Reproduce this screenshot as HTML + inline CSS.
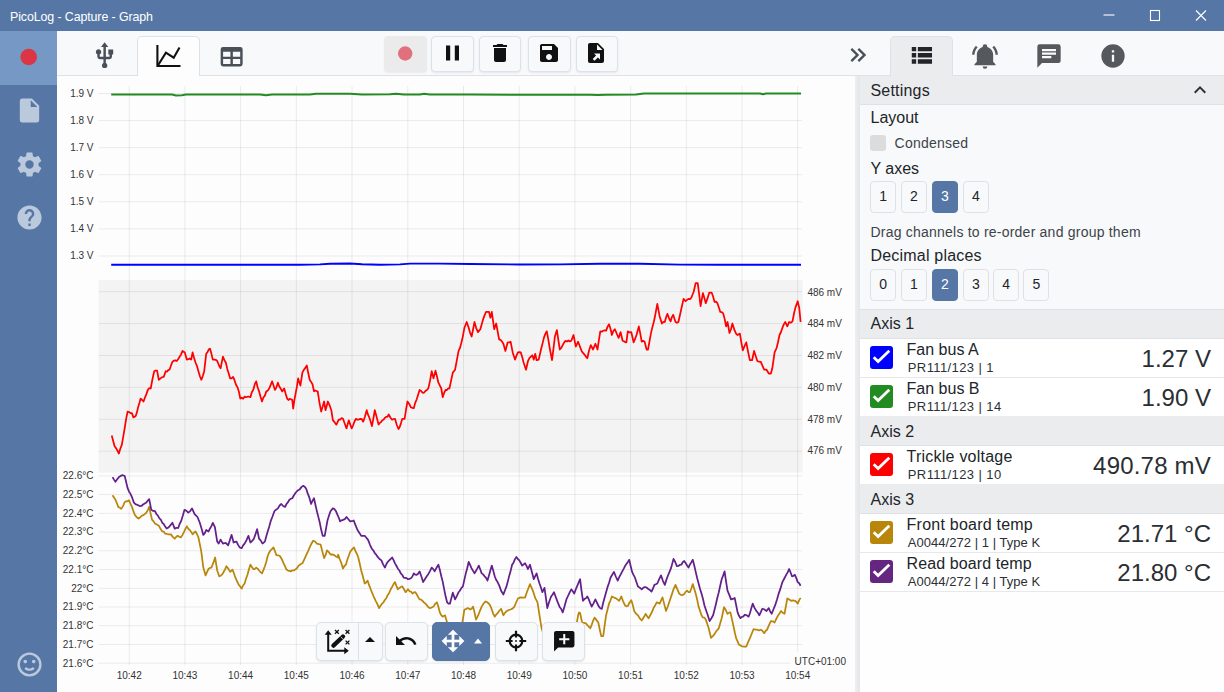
<!DOCTYPE html>
<html lang="en">
<head>
<meta charset="utf-8">
<title>PicoLog - Capture - Graph</title>
<style>
*{box-sizing:border-box;margin:0;padding:0}
html,body{width:1224px;height:692px;overflow:hidden;background:#fdfdfd;font-family:"Liberation Sans",Arial,sans-serif;color:#212529}
.abs{position:absolute}
#titlebar{position:absolute;left:0;top:0;width:1224px;height:31px;background:#5677a5;color:#fff}
#titlebar .t{position:absolute;left:10px;top:10px;font-size:12.4px;line-height:15px;letter-spacing:-0.1px}
#sidebar{position:absolute;z-index:2;left:0;top:31px;width:56.8px;height:661px;background:#5677a5}
#sidebar .hl{position:absolute;left:0;top:0;width:56.8px;height:53.7px;background:#7599c4}
#sidebar svg{position:absolute;fill:#bbc9dc}
#tabbar{position:absolute;left:56px;top:31px;width:1168px;height:45px;background:#f8f9fa;border-bottom:1px solid #dee2e6}
.tab{position:absolute;top:5px;height:40px;width:63px;border:1px solid #dee2e6;border-bottom:none;border-radius:5px 5px 0 0}
.tb{position:absolute;top:5px;height:36px;width:42.6px;border:1px solid #dbe2ea;border-radius:4px;background:#f8f9fa;box-shadow:0 1px 2px rgba(0,0,0,.08)}
.tb svg,.cb svg{position:absolute}
.chart{position:absolute;left:56px;top:76px}
#split{position:absolute;left:855px;top:76px;width:4.6px;height:616px;background:linear-gradient(90deg,#eeeff0,#e3e5e7)}
#panel{position:absolute;left:859.6px;top:76px;width:364.4px;height:616px;background:#fefefe}
#panel .body{position:absolute;left:0;top:0;width:364.4px;height:234px;background:#f8f9fa}
#panel .hdr{position:absolute;left:0;width:364.4px;background:#ebecee;border-top:1px solid #dee2e6;border-bottom:1px solid #dee2e6;font-size:16px}
#panel .hdr span{position:absolute;left:10.9px}
#panel .h{position:absolute;left:10.9px;font-size:16px;line-height:18px;white-space:nowrap}
#panel .s{position:absolute;left:10.9px;font-size:14px;line-height:16px;color:#3d4349;white-space:nowrap}
.nb{position:absolute;width:26px;height:31.6px;border:1px solid #dee2e6;border-radius:4px;background:#f8f9fa;font-size:14px;line-height:29.6px;text-align:center;color:#212529}
.nb.on{background:#5677a5;border-color:#5677a5;color:#fff}
.row{position:absolute;left:0;width:364.4px;height:39px;background:#fff;border-bottom:1px solid #e6e8eb}
.row .ck{position:absolute;left:10.3px;top:7.1px;width:23px;height:23px;border-radius:3px}
.row .ck svg{position:absolute;left:0;top:0}
.row .n{position:absolute;left:47px;top:2.2px;font-size:16px;line-height:18px;white-space:nowrap}
.row .d{position:absolute;left:48.2px;top:22.6px;font-size:13px;line-height:14px;letter-spacing:0.4px;white-space:nowrap;color:#2b3035}
.row .v{position:absolute;right:13px;top:6px;font-size:24px;line-height:28px;white-space:nowrap;color:#2a2e33}
.cb{position:absolute;top:622px;height:39px;border:1px solid #dbe2ea;border-radius:5px;background:#f8f9fa;box-shadow:0 1px 2px rgba(0,0,0,.1)}
</style>
</head>
<body>
<svg class="chart" width="800" height="616" viewBox="56 76 800 616">
<rect x="56" y="76" width="800" height="616" fill="#fdfdfd"/>
<rect x="98.5" y="280" width="704" height="192.6" fill="#f3f3f3"/>
<path d="M129.2 86V665 M184.9 86V665 M240.6 86V665 M296.3 86V665 M352.0 86V665 M407.8 86V665 M463.5 86V665 M519.2 86V665 M574.9 86V665 M630.6 86V665 M686.3 86V665 M742.0 86V665 M797.7 86V665 M98.5 93.5H802 M98.5 120.6H802 M98.5 147.7H802 M98.5 174.7H802 M98.5 201.8H802 M98.5 228.9H802 M98.5 256.0H802 M98.5 291.7H802 M98.5 323.6H802 M98.5 355.5H802 M98.5 387.4H802 M98.5 419.3H802 M98.5 451.2H802 M98.5 475.9H802 M98.5 494.6H802 M98.5 513.4H802 M98.5 532.1H802 M98.5 550.8H802 M98.5 569.5H802 M98.5 588.3H802 M98.5 607.0H802 M98.5 625.7H802 M98.5 644.5H802 M98.5 663.2H802" stroke="#000" stroke-opacity="0.075" stroke-width="1" fill="none"/>
<polyline points="111.2,94.5 160,94.6 172,94.6 176,95.4 182,95.2 186,94.6 260,94.6 266,95.3 272,94.6 310,94.5 316,93.8 350,93.7 362,94.4 390,94.2 396,93.7 404,94.4 420,94.4 424,93.8 430,94.5 470,94.6 590,94.7 598,95.1 606,94.7 636,94.6 644,93.6 700,93.5 760,93.5 763,94.3 766,93.5 801,93.5" fill="none" stroke="#228b22" stroke-width="2" stroke-linejoin="round"/>
<polyline points="111.2,264.7 300,264.7 320,264.4 330,263.7 350,263.5 362,264.2 380,264.7 400,264.4 410,263.6 440,263.6 470,264.0 520,264.5 560,264.4 600,263.8 640,263.7 680,264.6 720,264.8 760,264.8 801,264.8" fill="none" stroke="#0000ff" stroke-width="1.9" stroke-linejoin="round"/>
<polyline points="111.7,435.6 113.2,441.0 114.6,446.3 116.0,448.1 117.5,450.7 118.9,453.5 120.3,448.7 121.8,444.9 123.2,436.9 124.7,428.2 126.1,419.1 127.6,411.6 129.0,412.0 130.5,413.1 131.9,413.1 133.4,417.4 135.7,416.0 136.9,412.4 138.1,407.3 139.4,403.0 140.6,398.6 142.1,400.0 143.5,401.5 144.9,397.7 146.4,394.1 147.8,389.9 149.2,388.2 150.7,388.5 152.4,379.5 154.2,371.2 155.6,370.5 157.1,370.6 158.8,379.8 160.0,378.8 161.2,377.8 162.5,377.0 163.7,376.9 165.7,371.2 167.0,371.7 168.2,370.1 169.5,369.7 170.9,365.8 172.4,361.9 173.8,360.7 175.3,360.4 176.7,361.0 178.1,359.2 179.6,356.7 181.1,354.4 182.5,350.9 184.8,352.4 186.8,359.6 188.3,359.2 189.7,358.5 191.2,359.6 192.6,352.4 194.1,358.0 195.5,362.5 196.9,365.8 198.4,371.2 199.9,376.2 201.3,379.8 202.8,376.1 204.2,371.2 206.2,353.8 207.4,352.4 208.7,349.5 209.9,348.6 211.4,353.6 212.8,359.6 214.3,359.5 215.7,359.8 217.2,361.0 218.9,365.3 220.6,368.3 222.9,356.7 224.4,360.2 225.8,362.5 227.3,368.9 228.7,373.6 230.2,378.4 231.6,378.4 233.1,376.9 234.5,380.2 236.0,384.7 237.4,387.1 238.9,391.8 240.3,398.6 241.8,397.7 243.2,398.7 244.7,396.6 246.1,397.2 247.5,396.7 249.0,396.7 250.4,397.2 251.8,392.2 253.3,389.7 254.8,384.2 256.2,381.3 257.6,387.3 259.1,391.4 260.6,397.0 262.0,401.5 263.4,397.5 264.9,395.6 266.3,391.4 267.8,390.4 269.2,388.5 270.6,385.1 272.1,381.3 273.6,385.7 275.0,389.9 276.4,387.3 277.9,382.7 279.3,386.5 280.8,388.8 282.2,391.4 284.2,388.5 285.6,393.6 287.1,398.6 288.4,400.0 289.7,398.8 291.0,399.3 292.3,400.1 293.2,408.7 294.4,400.0 295.6,393.6 296.9,386.7 298.1,378.4 300.4,385.6 302.4,372.6 303.9,369.7 305.3,367.9 306.8,365.4 308.2,372.8 309.7,379.8 311.1,381.9 312.5,384.2 314.0,391.4 315.2,390.4 316.5,391.1 317.7,391.4 319.4,402.3 321.2,411.6 322.6,406.8 324.1,401.5 325.5,410.2 327.9,401.5 329.6,405.3 331.3,410.2 332.9,420.3 334.2,421.7 336.4,424.6 337.1,423.2 338.7,419.7 340.1,419.6 341.6,418.1 343.0,418.8 344.8,423.7 346.5,428.4 348.8,420.3 350.2,424.4 351.7,428.4 353.1,425.3 354.6,421.2 356.0,418.8 357.4,419.7 358.9,419.6 360.3,418.8 361.8,419.2 363.2,421.7 364.9,416.7 366.7,410.2 368.0,414.7 369.3,417.5 370.6,421.5 371.9,426.1 373.4,418.3 374.8,410.2 376.1,415.0 377.3,419.6 378.6,424.6 379.8,422.9 381.1,422.0 382.3,420.2 383.5,419.7 384.8,417.9 386.1,416.9 387.4,416.9 388.7,414.5 390.4,417.5 392.1,419.7 393.6,419.0 395.0,418.8 396.8,425.0 398.5,429.0 399.8,426.7 401.0,423.1 402.3,418.8 404.6,418.8 406.1,409.4 407.5,401.5 409.2,403.9 410.9,407.3 412.4,407.9 413.8,408.2 415.2,402.9 416.7,399.3 418.2,394.6 419.6,389.9 421.0,390.9 422.5,392.6 423.9,392.8 425.4,391.0 426.8,390.1 428.3,388.5 430.0,380.9 431.7,371.2 433.5,378.4 435.5,370.6 436.9,376.3 438.4,382.7 439.9,385.7 441.3,388.5 442.7,397.2 444.1,393.0 445.6,389.9 446.9,390.1 448.1,388.4 449.4,388.5 451.1,380.6 452.8,372.6 455.1,369.7 456.9,359.8 458.6,350.9 460.1,347.6 461.5,342.3 462.9,336.1 464.4,327.8 466.7,322.0 468.7,327.8 470.1,332.8 471.6,336.5 473.1,329.3 474.5,322.0 476.2,328.1 478.0,332.1 480.3,329.2 481.8,324.1 483.2,319.1 484.6,315.1 486.1,311.9 487.6,311.9 489.0,311.9 490.4,317.7 491.8,311.9 494.2,329.2 496.2,323.5 497.6,331.1 499.1,339.4 500.5,339.8 502.0,341.5 503.4,343.7 505.4,350.9 507.7,342.3 509.1,342.5 510.6,341.7 512.7,352.4 515.0,359.6 516.5,355.6 517.9,352.4 519.3,352.1 520.8,352.4 522.2,356.9 523.6,362.5 526.0,369.7 528.0,361.0 529.4,358.2 530.9,356.7 532.3,355.3 533.8,359.6 535.2,353.8 536.6,360.2 538.7,359.6 541.0,349.5 542.5,343.6 543.9,337.9 545.3,333.9 546.8,331.3 548.2,338.9 549.7,348.0 552.0,360.2 553.5,348.5 554.9,336.5 556.9,330.1 558.3,339.7 559.8,349.5 561.2,348.0 562.7,345.1 564.1,342.6 565.5,340.8 567.0,341.6 568.4,340.5 569.8,341.4 571.3,340.8 573.5,335.0 575.8,346.6 578.1,341.7 579.9,346.5 581.6,350.9 583.0,352.9 584.5,354.6 585.9,356.6 587.3,358.2 589.0,350.8 590.8,345.1 593.1,349.5 595.4,343.7 597.5,349.5 598.9,340.1 600.3,331.3 601.8,331.7 603.2,330.8 604.6,330.3 606.1,330.7 607.5,326.9 609.0,324.3 610.5,328.8 611.9,335.0 613.3,331.1 614.8,329.2 616.1,332.0 617.3,335.0 618.6,337.9 620.6,332.1 622.6,340.8 623.9,341.3 625.1,342.1 626.4,342.3 627.8,331.3 629.5,332.4 631.3,332.1 633.6,342.3 635.0,339.2 636.5,335.0 638.8,326.4 640.2,333.2 641.7,341.7 643.2,340.8 644.6,341.7 646.6,349.5 648.0,349.5 649.5,341.4 650.9,333.6 652.3,327.4 653.8,322.0 655.5,313.7 657.3,303.8 659.6,316.2 661.9,323.5 663.3,321.9 664.8,322.0 666.1,317.2 667.4,313.9 669.0,318.1 670.6,321.4 671.9,317.1 673.2,314.8 675.5,322.0 677.0,322.8 678.4,322.0 679.8,315.7 681.3,309.0 683.6,298.9 685.6,301.2 687.0,299.8 688.5,298.9 690.0,299.2 691.4,297.5 693.7,291.7 695.7,283.0 697.7,283.0 699.2,294.7 700.6,306.1 702.9,293.1 704.3,297.8 705.8,303.2 707.5,298.4 709.3,292.5 711.6,292.5 713.0,296.2 714.5,301.8 716.0,301.6 717.4,303.2 718.8,307.3 720.3,311.9 721.8,312.2 723.2,313.4 724.7,319.1 726.1,326.4 727.5,322.0 729.5,333.0 731.0,329.2 732.4,323.5 734.7,330.7 736.2,333.9 737.6,335.0 739.9,333.6 741.3,342.1 742.8,350.3 744.5,346.1 746.3,342.3 748.0,351.3 749.8,360.2 752.1,360.2 754.1,350.9 755.7,355.9 757.3,361.0 759.0,361.7 760.8,361.9 762.5,365.8 764.2,369.7 766.5,369.7 768.8,373.5 770.9,373.5 772.3,368.3 774.6,352.4 776.6,348.0 778.0,342.2 779.5,335.0 781.0,332.0 782.4,327.8 783.8,324.4 785.3,322.0 787.3,326.4 789.1,322.0 790.8,322.7 792.5,321.4 794.0,313.5 795.4,307.6 797.7,301.2 799.2,307.6 800.6,322.0" fill="none" stroke="#ff0000" stroke-width="1.75" stroke-linejoin="round"/>
<polyline points="112.5,495.3 114.0,497.6 115.4,499.7 116.8,503.0 118.3,506.9 119.8,507.7 121.2,508.9 123.0,506.1 124.7,502.0 126.1,501.2 127.6,501.3 129.0,500.3 130.4,503.7 131.9,506.9 133.4,511.1 134.8,514.7 136.7,517.3 138.6,518.5 140.3,517.2 142.0,515.6 143.5,515.2 144.9,513.9 146.4,512.7 147.8,510.1 149.2,506.9 150.6,513.6 152.1,519.9 153.6,521.4 155.0,523.4 156.9,524.6 158.8,525.7 160.6,529.1 162.3,531.5 163.7,531.6 165.2,533.7 166.6,533.8 168.0,534.3 169.5,534.4 170.9,534.4 172.8,536.9 174.7,538.7 176.1,537.0 177.6,535.8 179.3,536.8 181.0,537.3 182.4,535.1 183.9,532.1 185.4,528.9 186.8,526.3 188.2,528.6 189.7,530.0 191.1,531.7 192.6,534.4 194.1,532.4 195.5,531.5 196.9,534.0 198.4,537.3 199.9,544.6 201.3,551.7 203.3,567.6 205.6,575.4 207.1,571.8 208.5,569.0 209.9,567.8 211.4,567.6 213.2,563.2 215.1,557.5 217.2,570.5 219.2,576.3 220.8,575.7 222.4,574.2 223.7,571.8 225.1,569.4 226.4,566.2 228.3,568.6 230.2,571.9 232.5,569.6 233.9,573.3 235.4,577.7 237.1,581.4 238.8,584.9 240.2,586.4 241.7,588.7 243.1,585.5 244.6,583.5 246.1,578.5 247.5,574.8 248.9,569.5 250.4,564.7 251.9,566.9 253.3,569.0 254.8,569.0 256.2,567.6 257.6,568.6 259.1,570.5 260.6,572.1 262.0,573.4 263.4,570.1 264.9,566.2 266.3,561.8 267.7,556.0 269.1,552.7 270.6,550.3 272.1,548.9 273.5,547.4 274.9,551.0 276.4,555.2 278.1,555.3 279.9,556.0 281.8,559.2 283.6,563.3 285.1,566.4 286.5,569.6 288.0,570.6 289.4,570.9 290.9,571.4 292.3,570.3 293.8,570.5 295.2,569.6 296.9,568.3 298.7,565.6 300.5,564.2 302.4,563.3 304.3,559.3 306.2,555.2 307.9,551.7 309.7,547.4 311.4,543.7 313.1,540.7 315.0,541.5 316.9,543.6 318.8,544.1 320.6,544.5 322.4,551.6 324.1,558.1 325.6,554.9 327.0,550.3 328.8,552.1 330.5,554.6 332.4,554.4 334.2,555.2 334.3,555.2 336.1,556.5 338.0,557.5 338.1,554.6 339.7,559.0 341.4,563.3 343.0,568.5 344.4,566.0 345.9,564.7 347.3,559.8 348.8,555.8 350.2,551.7 352.1,549.4 354.0,547.4 355.4,551.0 356.9,553.9 358.3,557.5 359.8,564.0 361.2,570.5 362.9,576.6 364.7,583.5 366.1,582.5 367.6,580.6 369.0,584.9 370.5,588.7 371.9,592.2 373.8,596.8 375.7,600.8 377.4,604.1 379.1,608.1 380.6,605.8 382.0,603.7 383.5,602.3 384.9,599.9 386.4,597.9 387.8,594.9 389.3,592.8 390.7,589.3 392.1,586.9 393.6,584.1 395.0,582.1 396.4,585.9 397.9,589.3 399.4,587.9 400.8,587.0 402.3,586.4 404.0,589.2 405.7,592.2 408.0,589.3 409.5,591.3 410.9,591.5 412.4,593.6 413.9,592.4 415.3,592.2 416.7,594.3 418.2,597.2 419.6,599.4 421.1,599.6 422.5,600.8 423.9,602.4 425.4,603.7 426.8,605.2 428.3,607.1 429.7,608.1 431.6,607.6 433.5,606.6 435.2,603.8 436.9,602.3 438.4,606.8 439.8,612.4 441.2,615.2 442.7,616.7 445.0,615.3 447.1,622.5 448.5,628.2 449.9,634.1 451.4,635.0 452.8,636.6 454.3,638.4 455.7,637.9 457.2,636.7 458.6,635.5 460.5,629.6 462.4,622.5 464.4,609.5 465.9,609.2 467.3,608.1 468.8,608.4 470.2,609.5 471.6,608.7 473.1,606.6 474.6,612.8 476.0,619.6 477.4,616.9 478.8,613.8 480.2,610.1 481.7,606.6 483.6,603.5 485.5,601.4 487.2,602.3 489.0,603.7 490.4,606.0 491.8,609.5 493.2,613.6 494.7,616.7 496.2,614.6 497.6,613.2 499.1,611.0 501.1,608.9 503.4,615.3 505.1,612.6 506.9,611.0 508.8,610.0 510.6,609.5 512.5,608.6 514.4,606.6 516.1,602.5 517.9,598.5 519.3,597.9 520.8,597.4 522.2,597.7 523.7,597.7 525.1,597.4 526.5,593.3 528.0,589.3 530.0,584.1 532.3,589.3 533.8,593.4 535.2,597.9 537.5,602.3 539.5,615.3 541.6,628.3 543.5,634.0 545.3,638.4 546.7,639.4 548.2,640.2 549.6,639.6 551.1,641.0 552.5,641.3 554.0,640.1 555.4,640.8 556.9,640.3 558.3,640.0 559.8,638.2 561.2,638.4 562.7,637.5 564.1,638.0 565.5,636.6 567.0,635.8 568.5,636.1 569.9,635.5 571.4,633.4 572.8,631.3 574.2,628.9 575.7,626.8 577.1,621.1 578.1,615.3 579.1,612.4 580.1,613.0 582.1,622.5 584.0,622.9 585.9,623.4 587.3,625.2 588.8,626.6 590.2,628.3 591.7,624.8 593.1,620.7 594.6,617.6 596.5,620.1 598.3,622.5 599.8,629.7 601.2,636.1 603.2,636.1 604.7,625.2 606.1,615.3 607.5,609.8 609.0,603.7 610.5,600.3 611.9,596.5 613.3,597.3 614.8,597.9 616.2,598.5 617.7,599.6 619.1,600.8 621.4,596.5 623.1,601.3 624.9,605.2 626.3,606.3 627.8,606.0 629.5,602.6 631.3,600.3 632.8,605.1 634.2,611.0 636.0,613.7 637.9,615.3 639.8,618.4 641.7,620.5 643.0,618.5 644.4,616.2 645.7,613.8 647.2,616.5 648.6,618.2 650.5,614.8 652.4,611.0 653.8,607.4 655.3,605.2 656.7,602.3 658.2,602.8 659.6,603.7 661.0,600.7 662.5,597.4 664.2,603.9 666.0,611.0 667.9,606.2 669.7,600.8 671.6,595.1 673.5,589.3 675.5,584.9 677.4,589.3 679.2,593.6 681.0,595.0 682.7,595.1 684.2,594.1 685.6,591.9 687.1,590.7 688.5,592.1 689.9,592.2 691.3,588.5 692.8,584.1 694.2,588.7 695.7,593.6 697.2,599.8 698.6,606.6 700.0,610.8 701.5,615.3 702.9,617.4 704.4,617.7 705.8,619.6 707.2,623.8 708.7,628.3 711.0,637.8 712.8,636.2 714.5,634.1 715.9,631.7 717.4,629.8 718.8,628.3 720.2,623.2 721.7,618.2 724.0,607.2 725.8,610.0 727.5,613.8 729.0,612.6 730.4,612.4 731.8,618.4 733.3,625.4 734.8,632.5 736.2,638.4 737.7,641.7 739.1,644.8 740.5,645.4 742.0,646.3 743.4,646.5 744.8,646.5 746.3,646.5 748.0,642.3 749.8,638.4 751.6,634.0 753.5,629.2 755.4,629.6 757.3,629.7 759.0,630.4 760.8,629.7 762.5,630.9 764.2,633.2 765.7,630.8 767.1,629.7 769.0,625.1 770.9,621.1 772.8,621.3 774.6,622.5 776.4,618.7 778.1,615.3 779.5,613.6 781.0,611.0 782.8,612.8 784.5,613.8 785.9,606.2 787.3,598.5 789.2,599.5 791.1,600.8 793.0,600.3 794.9,600.8 796.3,601.8 797.7,603.7 799.2,600.1 800.6,597.9" fill="none" stroke="#b8860b" stroke-width="1.75" stroke-linejoin="round"/>
<polyline points="112.5,477.1 114.0,479.6 115.4,481.8 117.2,479.2 118.9,477.1 120.7,475.9 122.4,475.1 124.7,476.0 126.2,482.3 127.6,488.1 129.1,491.7 130.5,493.9 132.2,497.7 133.9,502.6 135.8,504.4 137.7,504.9 139.6,506.1 141.4,506.0 143.1,504.5 144.7,503.5 146.4,502.6 147.8,500.6 149.2,499.1 151.3,509.8 153.2,510.9 155.0,511.2 156.4,514.0 157.9,515.6 159.4,518.4 160.8,519.7 162.3,522.8 163.7,524.0 165.2,526.6 166.6,528.6 168.1,527.8 169.5,526.3 170.9,524.7 172.4,522.8 174.7,528.6 176.4,527.9 178.2,528.0 179.6,524.0 181.0,521.4 182.8,515.7 184.5,509.8 186.4,510.8 188.3,512.7 190.2,511.1 192.0,508.4 194.6,514.1 196.1,515.6 197.5,517.0 199.8,522.8 201.6,528.8 203.3,534.9 204.8,533.1 206.2,530.0 208.5,531.5 209.9,528.7 211.4,526.1 212.8,522.8 214.9,527.1 217.2,541.6 218.6,543.6 220.6,539.6 222.9,543.6 224.4,543.2 225.8,543.0 228.2,545.3 229.9,540.0 231.6,534.9 233.6,542.5 235.1,541.9 236.5,541.6 238.1,544.9 239.7,547.4 241.7,548.2 243.1,545.4 244.6,543.6 246.5,540.2 248.4,535.8 250.4,542.5 252.2,540.9 253.9,538.7 255.5,534.1 257.1,529.2 259.1,538.7 260.8,540.6 262.5,543.6 264.9,541.6 266.3,536.3 267.7,531.5 269.1,527.0 270.6,521.4 272.5,516.5 274.4,511.2 276.1,509.7 277.9,508.4 279.6,505.5 281.3,504.0 283.2,506.0 285.1,506.9 286.5,504.0 288.0,502.1 289.4,499.7 290.9,498.8 292.3,498.2 294.1,495.0 295.8,492.5 297.6,490.6 299.5,489.6 301.4,487.1 303.3,485.8 304.8,486.9 306.2,488.7 307.6,493.2 309.1,496.8 311.1,504.0 312.6,500.7 314.0,498.2 315.4,504.8 316.9,511.2 318.4,517.1 319.8,522.8 321.2,529.8 322.7,535.8 324.7,535.8 326.1,528.1 327.6,519.9 329.1,515.3 330.5,511.2 332.8,508.4 334.2,508.9 335.7,510.7 337.4,514.6 339.1,518.5 340.1,521.4 341.6,520.3 343.0,519.9 344.8,519.1 346.5,517.0 348.4,519.2 350.2,521.4 351.9,521.2 353.7,520.5 355.6,525.4 357.5,530.0 359.4,532.9 361.2,535.8 362.9,535.9 364.7,535.8 366.4,537.8 368.2,540.1 370.0,544.8 371.9,548.8 373.4,550.5 374.8,553.2 376.2,554.7 377.7,556.9 379.5,559.0 381.4,560.4 383.1,564.4 384.9,567.6 386.4,564.0 387.8,561.8 389.2,560.4 390.7,559.0 392.1,557.5 393.6,560.1 395.0,563.3 396.5,566.0 397.9,568.7 399.4,570.5 400.8,573.4 402.3,575.0 403.7,577.7 405.1,577.8 406.6,578.1 408.0,579.2 409.4,578.9 410.9,578.3 412.4,576.5 413.8,573.4 415.2,574.7 416.7,574.8 418.1,573.7 419.6,571.4 421.4,576.5 423.1,582.1 425.0,579.0 426.8,576.3 428.4,573.9 430.1,570.9 431.7,567.6 433.1,568.9 434.6,571.4 436.5,567.8 438.4,564.7 439.9,570.1 441.3,576.3 442.8,582.1 444.2,589.3 445.6,596.3 447.1,602.3 448.5,603.7 449.9,603.7 451.4,598.0 452.8,592.7 455.1,599.4 456.9,595.9 458.6,592.2 460.0,590.5 461.5,587.8 462.9,586.4 464.4,579.6 465.8,573.4 467.2,568.2 468.7,561.8 470.1,564.8 471.6,568.5 473.1,570.9 474.5,573.4 475.9,571.0 477.4,568.4 478.8,565.6 480.2,569.3 481.7,573.4 483.1,574.4 484.6,576.3 486.1,577.9 487.5,580.6 488.9,575.8 490.4,570.3 491.8,565.6 493.2,570.4 494.7,576.3 496.1,579.8 497.6,582.1 499.4,585.9 501.1,590.7 503.4,594.5 504.8,590.7 506.3,586.9 507.7,582.1 509.2,575.9 510.6,571.1 512.1,564.7 513.5,562.7 515.0,559.1 516.4,556.9 517.8,559.0 519.3,560.4 520.8,563.0 522.2,565.6 523.7,564.4 525.1,563.3 526.5,565.9 528.0,569.0 530.0,564.7 531.9,572.0 533.8,579.2 535.2,576.2 536.6,573.4 538.0,578.7 539.5,583.5 541.0,587.7 542.4,592.2 544.5,587.8 545.9,597.9 547.3,608.1 549.2,601.7 551.1,596.5 552.5,594.7 554.0,592.2 555.4,596.0 556.9,600.1 558.3,603.7 559.8,607.3 561.2,609.0 562.7,612.4 564.5,606.4 566.4,599.4 568.0,596.0 569.7,592.3 571.3,589.3 572.8,591.2 574.2,593.6 576.4,587.8 578.2,583.6 580.1,579.2 581.5,590.6 583.0,600.8 584.4,599.1 585.9,598.3 587.3,596.5 588.8,599.4 590.2,603.1 591.7,606.6 593.5,603.3 595.4,599.4 597.1,603.0 598.9,606.6 600.3,608.3 601.8,608.9 603.2,602.7 604.7,597.3 606.1,592.2 607.6,586.9 609.0,583.0 610.5,577.7 612.2,574.7 613.9,571.9 615.8,576.5 617.7,580.6 619.1,577.4 620.6,574.6 622.0,571.9 623.9,568.4 625.8,564.7 627.5,562.6 629.2,559.8 630.7,566.2 632.1,571.9 633.5,574.9 635.0,577.7 636.5,582.3 637.9,586.4 639.8,587.7 641.7,589.3 643.4,587.6 645.1,587.0 646.5,587.5 648.0,588.7 649.8,589.9 651.5,591.6 653.0,588.5 654.4,584.9 655.8,584.3 657.3,583.5 659.1,579.3 661.0,575.4 662.9,580.8 664.8,584.9 666.5,579.4 668.3,574.8 669.8,571.1 671.2,567.6 673.5,558.9 675.2,562.0 676.9,566.2 678.4,566.0 679.8,564.8 681.3,564.7 682.8,562.2 684.2,561.0 685.6,563.0 687.1,565.5 688.5,567.6 689.9,564.5 691.4,562.2 692.8,559.8 694.2,565.2 695.7,571.9 697.2,578.2 698.6,583.5 700.0,588.7 701.5,593.6 703.0,598.9 704.4,605.2 705.8,609.5 707.3,613.8 709.6,621.1 711.4,618.2 713.1,615.3 714.5,609.8 716.0,603.7 717.4,597.5 718.8,592.2 720.2,585.8 721.7,579.2 723.2,575.4 724.6,571.4 726.0,581.1 727.5,590.7 729.2,594.6 731.0,599.4 732.9,598.9 734.7,597.9 736.2,605.3 737.6,612.4 739.0,615.8 740.5,618.2 742.0,616.8 743.4,616.4 744.9,614.7 746.8,615.4 748.6,616.7 750.0,613.0 751.3,608.2 752.7,603.7 754.5,607.9 756.4,611.0 757.8,612.6 759.3,615.3 760.8,612.1 762.2,608.9 763.6,609.0 765.1,609.9 766.5,611.0 768.8,608.1 770.2,611.5 771.7,613.8 773.5,609.2 775.2,605.2 777.0,599.6 778.7,593.6 780.5,588.4 782.4,582.1 784.3,578.5 786.2,574.8 787.7,572.4 789.1,569.0 790.5,572.2 792.0,576.3 793.5,575.8 794.9,574.8 796.3,578.1 797.7,582.1 799.2,583.3 800.6,585.8" fill="none" stroke="#63208a" stroke-width="1.75" stroke-linejoin="round"/>
<rect x="790.5" y="652" width="60" height="16" fill="#fdfdfd"/>
<g font-family="Liberation Sans, Arial, sans-serif" font-size="10" fill="#333">
<text x="93.5" y="96.8" text-anchor="end">1.9 V</text>
<text x="93.5" y="123.9" text-anchor="end">1.8 V</text>
<text x="93.5" y="151.0" text-anchor="end">1.7 V</text>
<text x="93.5" y="178.0" text-anchor="end">1.6 V</text>
<text x="93.5" y="205.1" text-anchor="end">1.5 V</text>
<text x="93.5" y="232.2" text-anchor="end">1.4 V</text>
<text x="93.5" y="259.3" text-anchor="end">1.3 V</text>
<text x="93.5" y="479.2" text-anchor="end">22.6°C</text>
<text x="93.5" y="497.9" text-anchor="end">22.5°C</text>
<text x="93.5" y="516.7" text-anchor="end">22.4°C</text>
<text x="93.5" y="535.4" text-anchor="end">22.3°C</text>
<text x="93.5" y="554.1" text-anchor="end">22.2°C</text>
<text x="93.5" y="572.8" text-anchor="end">22.1°C</text>
<text x="93.5" y="591.6" text-anchor="end">22°C</text>
<text x="93.5" y="610.3" text-anchor="end">21.9°C</text>
<text x="93.5" y="629.0" text-anchor="end">21.8°C</text>
<text x="93.5" y="647.8" text-anchor="end">21.7°C</text>
<text x="93.5" y="666.5" text-anchor="end">21.6°C</text>
<text x="807.4" y="295.6" font-size="10">486 mV</text>
<text x="807.4" y="327.4" font-size="10">484 mV</text>
<text x="807.4" y="359.1" font-size="10">482 mV</text>
<text x="807.4" y="390.9" font-size="10">480 mV</text>
<text x="807.4" y="422.6" font-size="10">478 mV</text>
<text x="807.4" y="454.4" font-size="10">476 mV</text>
<text x="129.2" y="679" text-anchor="middle">10:42</text>
<text x="184.9" y="679" text-anchor="middle">10:43</text>
<text x="240.6" y="679" text-anchor="middle">10:44</text>
<text x="296.3" y="679" text-anchor="middle">10:45</text>
<text x="352.0" y="679" text-anchor="middle">10:46</text>
<text x="407.8" y="679" text-anchor="middle">10:47</text>
<text x="463.5" y="679" text-anchor="middle">10:48</text>
<text x="519.2" y="679" text-anchor="middle">10:49</text>
<text x="574.9" y="679" text-anchor="middle">10:50</text>
<text x="630.6" y="679" text-anchor="middle">10:51</text>
<text x="686.3" y="679" text-anchor="middle">10:52</text>
<text x="742.0" y="679" text-anchor="middle">10:53</text>
<text x="797.7" y="679" text-anchor="middle">10:54</text>
<text x="846" y="664.7" text-anchor="end" font-size="10">UTC+01:00</text>
</g>
</svg>

<div id="titlebar">
  <div class="t">PicoLog - Capture - Graph</div>
  <svg class="abs" style="left:1098px;top:4px" width="120" height="24" viewBox="1098 4 120 24" fill="none" stroke="#fff" stroke-width="1.1">
    <path d="M1103.5 15H1114.5"/>
    <rect x="1150.5" y="10.5" width="9" height="10"/>
    <path d="M1196 10.5L1206 20.5M1206 10.5L1196 20.5"/>
  </svg>
</div>

<div id="sidebar">
  <div class="hl"></div>
  <svg style="left:0;top:0" width="56" height="53"><circle cx="28.7" cy="26" r="8.3" fill="#dc3545"/></svg>
  <!-- file -->
  <svg style="left:14.5px;top:65px" width="29" height="29" viewBox="0 0 24 24"><path d="M13,9V3.500L18.500,9M6,2C4.890,2 4,2.890 4,4V20A2,2 0 0,0 6,22H18A2,2 0 0,0 20,20V8L14,2H6Z"/></svg>
  <!-- cog -->
  <svg style="left:14.500px;top:118.500px" width="29" height="29" viewBox="0 0 24 24"><path d="M12,15.500A3.500,3.500 0 0,1 8.500,12A3.500,3.500 0 0,1 12,8.500A3.500,3.500 0 0,1 15.500,12A3.500,3.500 0 0,1 12,15.500M19.430,12.970C19.470,12.650 19.500,12.330 19.500,12C19.500,11.670 19.470,11.340 19.430,11L21.540,9.370C21.730,9.220 21.780,8.950 21.660,8.730L19.660,5.270C19.540,5.050 19.270,4.960 19.050,5.050L16.560,6.050C16.040,5.660 15.500,5.320 14.870,5.070L14.500,2.420C14.460,2.180 14.250,2 14,2H10C9.750,2 9.540,2.180 9.500,2.420L9.130,5.070C8.500,5.320 7.960,5.660 7.440,6.050L4.950,5.050C4.730,4.960 4.460,5.050 4.340,5.270L2.340,8.730C2.210,8.950 2.270,9.220 2.460,9.370L4.570,11C4.530,11.340 4.500,11.670 4.500,12C4.500,12.330 4.530,12.650 4.570,12.970L2.460,14.630C2.270,14.780 2.210,15.050 2.340,15.270L4.340,18.730C4.460,18.950 4.730,19.030 4.950,18.950L7.440,17.940C7.960,18.340 8.500,18.680 9.130,18.930L9.500,21.580C9.540,21.820 9.750,22 10,22H14C14.250,22 14.460,21.820 14.500,21.580L14.870,18.930C15.500,18.670 16.040,18.340 16.560,17.940L19.050,18.950C19.270,19.030 19.540,18.950 19.660,18.730L21.660,15.270C21.780,15.050 21.730,14.780 21.540,14.630L19.430,12.970Z"/></svg>
  <!-- help -->
  <svg style="left:14.500px;top:171.800px" width="29" height="29" viewBox="0 0 24 24"><path d="M15.070,11.250L14.170,12.170C13.450,12.890 13,13.500 13,15H11V14.500C11,13.390 11.450,12.390 12.170,11.670L13.410,10.410C13.780,10.050 14,9.550 14,9C14,7.890 13.100,7 12,7A2,2 0 0,0 10,9H8A4,4 0 0,1 12,5A4,4 0 0,1 16,9C16,9.880 15.640,10.670 15.070,11.250M13,19H11V17H13M12,2A10,10 0 0,0 2,12A10,10 0 0,0 12,22A10,10 0 0,0 22,12C22,6.470 17.500,2 12,2Z"/></svg>
  <!-- smiley -->
  <svg style="left:14.500px;top:618.500px" width="29" height="29" viewBox="0 0 24 24"><path d="M20,12A8,8 0 0,0 12,4A8,8 0 0,0 4,12A8,8 0 0,0 12,20A8,8 0 0,0 20,12M22,12A10,10 0 0,1 12,22A10,10 0 0,1 2,12A10,10 0 0,1 12,2A10,10 0 0,1 22,12M10,9.500C10,10.300 9.300,11 8.500,11C7.700,11 7,10.300 7,9.500C7,8.700 7.700,8 8.500,8C9.300,8 10,8.700 10,9.500M17,9.500C17,10.300 16.300,11 15.500,11C14.700,11 14,10.300 14,9.500C14,8.700 14.700,8 15.500,8C16.300,8 17,8.700 17,9.500M12,17.230C10.250,17.230 8.710,16.500 7.810,15.420L9.230,14C9.680,14.720 10.750,15.230 12,15.230C13.250,15.230 14.320,14.720 14.770,14L16.190,15.420C15.290,16.500 13.750,17.230 12,17.230Z"/></svg>
</div>

<div id="tabbar">
  <!-- left tabs (coords relative to tabbar: x-56, y-31) -->
  <svg class="abs" style="left:34px;top:10.400px" width="29.300" height="29.300" viewBox="0 0 24 24" fill="#495057"><path d="M15,7V11H16V13H13V5H15L12,1L9,5H11V13H8V10.930C8.700,10.560 9.200,9.850 9.200,9C9.200,7.780 8.210,6.800 7,6.800C5.780,6.800 4.800,7.780 4.800,9C4.800,9.850 5.300,10.560 6,10.930V13A2,2 0 0,0 8,15H11V18.050C10.290,18.410 9.800,19.150 9.800,20A2.200,2.200 0 0,0 12,22.200A2.200,2.200 0 0,0 14.200,20C14.200,19.150 13.710,18.410 13,18.050V15H16A2,2 0 0,0 18,13V11H19V7H15Z"/></svg>
  <div class="tab" style="left:80.900px;width:63.600px;background:#fdfdfd"></div>
  <svg class="abs" style="left:96px;top:9px" width="36" height="32" viewBox="152 40 36 32" fill="none" stroke="#111" stroke-width="2.100" stroke-linecap="butt" stroke-linejoin="miter"><path d="M157.400 45V66H180.500"/><path d="M157.900 65.500L165.900 52.600L173.700 57.700L179.500 47.600"/></svg>
  <svg class="abs" style="left:161.400px;top:10.500px" width="29.300" height="29.300" viewBox="0 0 24 24" fill="#495057"><path d="M5,4H19A2,2 0 0,1 21,6V18A2,2 0 0,1 19,20H5A2,2 0 0,1 3,18V6A2,2 0 0,1 5,4M5,8V12H11V8H5M13,8V12H19V8H13M5,14V18H11V14H5M13,14V18H19V14H13Z"/></svg>

  <!-- toolbar buttons -->
  <div class="tb" style="left:328px;background:#ebebeb;border-color:#ebebeb;box-shadow:0 1px 2px rgba(0,0,0,.06)"><svg style="left:8px;top:5px" width="24" height="24"><circle cx="12.200" cy="11.500" r="7.200" fill="#e0717c"/></svg></div>
  <div class="tb" style="left:375.300px"><svg style="left:7.600px;top:3.900px" width="24" height="24" viewBox="0 0 24 24" fill="#111"><path d="M6 19.500h4.200V4.500H6v15zm8.800-15v15H19V4.500h-4.200z"/></svg></div>
  <div class="tb" style="left:422.800px"><svg style="left:7.800px;top:3.900px" width="24" height="24" viewBox="0 0 24 24" fill="#111"><path d="M6 19c0 1.100.9 2 2 2h8c1.100 0 2-.9 2-2V7H6v12zM19 4h-3.500l-1-1h-5l-1 1H5v2h14V4z"/></svg></div>
  <div class="tb" style="left:472px"><svg style="left:8px;top:4.400px" width="24" height="24" viewBox="0 0 24 24" fill="#111"><path d="M17 3H5c-1.110 0-2 .9-2 2v14c0 1.100.89 2 2 2h14c1.100 0 2-.9 2-2V7l-4-4zm-5 16c-1.660 0-3-1.340-3-3s1.340-3 3-3 3 1.340 3 3-1.340 3-3 3zm3-10H5V5h10v4z"/></svg></div>
  <div class="tb" style="left:519.500px"><svg style="left:7.400px;top:4.200px" width="24" height="24" viewBox="0 0 24 24" fill="#111"><path fill-rule="evenodd" d="M6 2c-1.100 0-1.990.9-1.990 2L4 20c0 1.100.89 2 1.990 2H18c1.100 0 2-.9 2-2V8l-6-6H6zm7 7V3.500L18.500 9H13z M10 12.500h6v6l-2.100-2.100-3.400 3.400-1.800-1.800 3.400-3.400z"/></svg></div>

  <!-- right tabs -->
  <svg class="abs" style="left:787.700px;top:9.800px" width="28" height="28" viewBox="0 0 24 24" fill="#495057"><path d="M5.590,7.410L7,6L13,12L7,18L5.590,16.590L10.170,12L5.590,7.410M11.590,7.410L13,6L19,12L13,18L11.590,16.590L16.170,12L11.590,7.410Z"/></svg>
  <div class="tab" style="left:834px;background:#ebecee;height:41px"></div>
  <svg class="abs" style="left:851px;top:10.200px" width="28.600" height="28.600" viewBox="0 0 24 24" fill="#212529"><path d="M4 5h3.700v3.700H4zM4 10.150h3.700v3.700H4zM4 15.300h3.700V19H4zM9.100 5H21v3.700H9.100zM9.100 10.150H21v3.700H9.100zM9.100 15.300H21V19H9.100z"/></svg>
  <svg class="abs" style="left:914.500px;top:10.800px" width="28" height="28" viewBox="0 0 24 24" fill="#55595d"><path d="M21,19V20H3V19L5,17V11C5,7.900 7.030,5.170 10,4.290C10,4.190 10,4.100 10,4A2,2 0 0,1 12,2A2,2 0 0,1 14,4C14,4.100 14,4.190 14,4.290C16.970,5.170 19,7.900 19,11V17L21,19M14,21A2,2 0 0,1 12,23A2,2 0 0,1 10,21M19.750,3.190L18.330,4.610C20.040,6.300 21,8.600 21,11H23C23,8.070 21.840,5.250 19.750,3.190M1,11H3C3,8.600 3.960,6.300 5.670,4.610L4.250,3.190C2.160,5.250 1,8.070 1,11Z"/></svg>
  <svg class="abs" style="left:979px;top:11px" width="28" height="28" viewBox="0 0 24 24" fill="#55595d"><path d="M20,2H4A2,2 0 0,0 2,4V22L6,18H20A2,2 0 0,0 22,16V4A2,2 0 0,0 20,2M6,9H18V11H6M14,14H6V12H14M18,8H6V6H18"/></svg>
  <svg class="abs" style="left:1043px;top:11px" width="28" height="28" viewBox="0 0 24 24" fill="#55595d"><path d="M13,9H11V7H13M13,17H11V11H13M12,2A10,10 0 0,0 2,12A10,10 0 0,0 12,22A10,10 0 0,0 22,12A10,10 0 0,0 12,2Z"/></svg>
</div>

<div id="split"></div>

<div id="panel">
  <div class="body"></div>
  <div class="hdr" style="top:0;height:29px;border-top:none"><span style="top:5.6px;line-height:18px;letter-spacing:0.2px">Settings</span>
    <svg class="abs" style="left:328.400px;top:2px" width="24" height="24" viewBox="0 0 24 24" fill="#2b3035"><path d="M12 8l-6 6 1.410 1.410L12 10.830l4.590 4.580L18 14z"/></svg>
  </div>
  <div class="h" style="top:33px">Layout</div>
  <div class="abs" style="left:10.500px;top:59.300px;width:16px;height:16px;border-radius:3px;background:#dcdcdc"></div>
  <div class="s" style="left:35px;top:58.500px;letter-spacing:0.22px">Condensed</div>
  <div class="h" style="top:83.500px">Y axes</div>
  <div class="nb" style="left:10.500px;top:105px">1</div>
  <div class="nb" style="left:41.400px;top:105px">2</div>
  <div class="nb on" style="left:72.300px;top:105px">3</div>
  <div class="nb" style="left:103.200px;top:105px">4</div>
  <div class="s" style="top:148.200px;letter-spacing:0.22px">Drag channels to re-order and group them</div>
  <div class="h" style="top:170.500px;letter-spacing:0.2px">Decimal places</div>
  <div class="nb" style="left:10.500px;top:193px">0</div>
  <div class="nb" style="left:41.400px;top:193px">1</div>
  <div class="nb on" style="left:72.300px;top:193px">2</div>
  <div class="nb" style="left:103.200px;top:193px">3</div>
  <div class="nb" style="left:133.500px;top:193px">4</div>
  <div class="nb" style="left:163.800px;top:193px">5</div>

  <div class="hdr" style="top:233px;height:30px"><span style="top:4.800px;line-height:18px">Axis 1</span></div>
  <div class="row" style="top:262.500px"><div class="ck" style="background:#0000ff"><svg width="23" height="23" viewBox="0 0 23 23"><path d="M3.700 11.300L8.100 15.500L19.300 4.800" fill="none" stroke="#fff" stroke-width="2.800"/></svg></div><div class="n">Fan bus A</div><div class="d">PR111/123 | 1</div><div class="v">1.27 V</div></div>
  <div class="row" style="top:301.500px;height:39.500px"><div class="ck" style="background:#228b22"><svg width="23" height="23" viewBox="0 0 23 23"><path d="M3.700 11.300L8.100 15.500L19.300 4.800" fill="none" stroke="#fff" stroke-width="2.800"/></svg></div><div class="n">Fan bus B</div><div class="d">PR111/123 | 14</div><div class="v">1.90 V</div></div>
  <div class="hdr" style="top:340px;height:30px;border-top:none"><span style="top:6.500px;line-height:18px">Axis 2</span></div>
  <div class="row" style="top:369.500px"><div class="ck" style="background:#ff0000"><svg width="23" height="23" viewBox="0 0 23 23"><path d="M3.700 11.300L8.100 15.500L19.300 4.800" fill="none" stroke="#fff" stroke-width="2.800"/></svg></div><div class="n" style="letter-spacing:0.23px">Trickle voltage</div><div class="d">PR111/123 | 10</div><div class="v" style="letter-spacing:0.2px">490.78 mV</div></div>
  <div class="hdr" style="top:408px;height:30px;border-top:none"><span style="top:6.500px;line-height:18px">Axis 3</span></div>
  <div class="row" style="top:437.700px"><div class="ck" style="background:#b8860b"><svg width="23" height="23" viewBox="0 0 23 23"><path d="M3.700 11.300L8.100 15.500L19.300 4.800" fill="none" stroke="#fff" stroke-width="2.800"/></svg></div><div class="n" style="letter-spacing:0.23px">Front board temp</div><div class="d" style="letter-spacing:0.04px">A0044/272 | 1 | Type K</div><div class="v">21.71 °C</div></div>
  <div class="row" style="top:476.500px"><div class="ck" style="background:#652682"><svg width="23" height="23" viewBox="0 0 23 23"><path d="M3.700 11.300L8.100 15.500L19.300 4.800" fill="none" stroke="#fff" stroke-width="2.800"/></svg></div><div class="n" style="letter-spacing:0.1px">Read board temp</div><div class="d" style="letter-spacing:0.04px">A0044/272 | 4 | Type K</div><div class="v">21.80 °C</div></div>
</div>

<!-- chart toolbar -->
<div class="cb" style="left:316px;width:66.500px">
  <div class="abs" style="left:41.300px;top:0;width:1px;height:37px;background:#dbe2ea"></div>
  <svg style="left:5px;top:2px" width="32" height="32" viewBox="322 625 32 32" fill="none" stroke="#111"><path d="M328.200 633V650.800H346" stroke-width="2"/><path d="M328.200 630.300l-3.500 4.500h7zM348.800 650.800l-4.500-3.500v7z" fill="#111" stroke="none"/><path d="M333.400 645.600L343 636.500" stroke-width="4.300" stroke-linecap="round"/><path d="M340.700 636.700l2.100 2.200" stroke="#f8f9fa" stroke-width="0.800"/><path d="M335 630l3.800 3.800m0-3.800l-3.800 3.800M345.600 630l3.800 3.800m0-3.800l-3.800 3.800M345.600 640.600l3.800 3.800m0-3.800l-3.800 3.800" stroke-width="1.250"/></svg>
  <svg style="left:41.200px;top:5.300px" width="24" height="24" viewBox="0 0 24 24" fill="#111"><path d="M7 14l5-5 5 5z"/></svg>
</div>
<div class="cb" style="left:384.600px;width:43.200px"><svg style="left:8.400px;top:6.200px" width="24" height="24" viewBox="0 0 24 24" fill="#111"><path d="M12.500 8c-2.650 0-5.050.99-6.900 2.600L2 7v9h9l-3.620-3.620c1.390-1.160 3.160-1.880 5.120-1.880 3.540 0 6.550 2.310 7.600 5.500l2.370-.78C21.080 11.030 17.150 8 12.500 8z"/></svg></div>
<div class="cb" style="left:432px;width:58.200px;background:#5677a5;border-color:#5677a5">
  <svg style="left:6.500px;top:5.100px" width="26" height="26" viewBox="0 0 24 24" fill="#fff" stroke="#fff" stroke-width="0.500" stroke-linejoin="round"><path d="M13,6V11H18V7.750L22.250,12L18,16.250V13H13V18H16.250L12,22.250L7.750,18H11V13H6V16.250L1.750,12L6,7.750V11H11V6H7.750L12,1.750L16.250,6H13Z"/></svg>
  <svg style="left:34.600px;top:7.300px" width="20" height="20" viewBox="0 0 20 20" fill="#fff"><path d="M6 13.400L10 8.500L14 13.400z"/></svg>
</div>
<div class="cb" style="left:495px;width:42.500px"><svg style="left:7.400px;top:5.400px" width="26" height="26" viewBox="0 0 26 26" fill="none" stroke="#111" stroke-width="2.200"><circle cx="13" cy="13" r="6.300"/><path d="M13 2.800V9.600M13 16.400V23.200M2.800 13H9.600M16.400 13H23.200"/><circle cx="13" cy="13" r="0.900" fill="#111" stroke="none"/></svg></div>
<div class="cb" style="left:542.200px;width:42.500px"><svg style="left:8.400px;top:5.900px" width="24.500" height="24.500" viewBox="0 0 24 24" fill="#111"><path transform="translate(24 0) scale(-1 1)" d="M22 4c0-1.100-.9-2-2-2H4c-1.100 0-2 .9-2 2v12c0 1.100.9 2 2 2h14l4 4V4zm-5 7h-4v4h-2v-4H7V9h4V5h2v4h4v2z"/></svg></div>

</body>
</html>
